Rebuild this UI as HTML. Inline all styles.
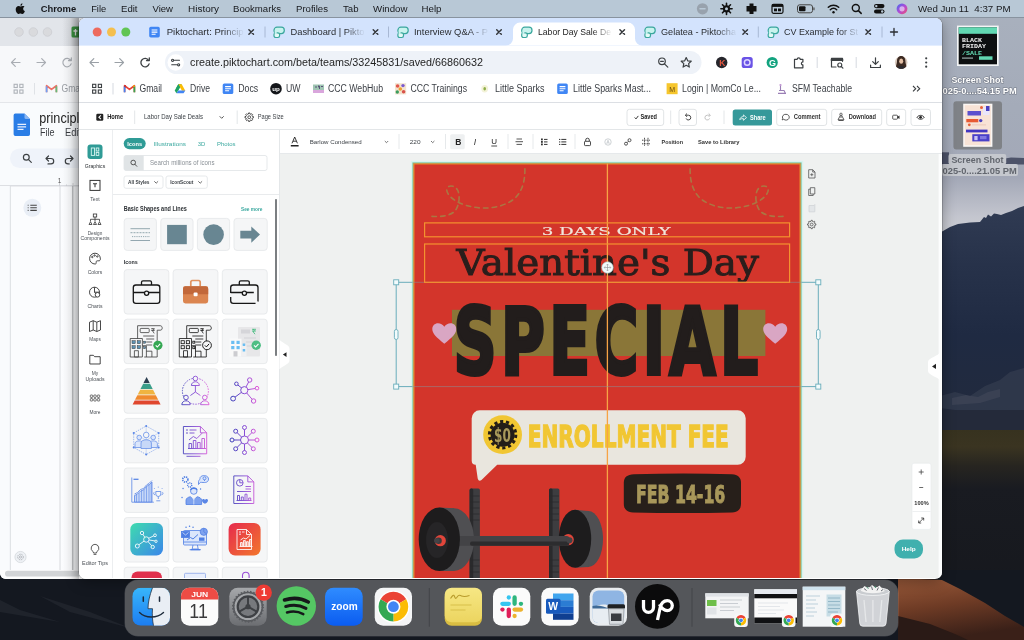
<!DOCTYPE html>
<html lang="en">
<head>
<meta charset="utf-8">
<title>Labor Day Sale Deals - Piktochart</title>
<style>
*{box-sizing:border-box;margin:0;padding:0}
html,body{width:1024px;height:640px;overflow:hidden;background:#1b1d24;font-family:"Liberation Sans",sans-serif;}
svg{position:absolute;left:0;top:0;overflow:hidden;display:block;will-change:transform}
svg text{font-family:"Liberation Sans",sans-serif;white-space:pre}
#desk{position:absolute;left:0;top:0;width:1024px;height:640px;overflow:hidden;background:#1d212b}
#menubar{position:absolute;left:0;top:0;width:1024px;height:17.600px;background:#b8c8d6}
#backwin{position:absolute;left:0;top:18px;width:90px;height:560.500px;background:#f9fbfd;overflow:hidden;border-radius:0 0 6px 6px}
#win{position:absolute;left:79px;top:18px;width:863px;height:560.5px;background:#fff;border-radius:6.500px 6.500px 7px 7px;overflow:hidden;}
#winshadow{position:absolute;left:79px;top:18px;width:863px;height:560.5px;border-radius:6.500px 6.500px 7px 7px;box-shadow:0 0 0 0.5px rgba(0,0,0,.32),0 3px 14px rgba(0,0,0,.34)}
#dock{position:absolute;left:125px;top:580px;width:773px;height:56px;background:#54565a;border-radius:13px;overflow:hidden;box-shadow:0 0 0 0.5px rgba(255,255,255,.18)}
.t{fill:#1f1f1f}
</style>
</head>
<body>
<div id="desk">
<svg id="wall" width="1024" height="640" viewBox="0 0 1024 640">
 <defs>
  <linearGradient id="sky" gradientUnits="userSpaceOnUse" x1="0" y1="0" x2="0" y2="240">
   <stop offset="0" stop-color="#a9b1be"/><stop offset="0.45" stop-color="#a4abb9"/><stop offset="0.74" stop-color="#a3a8b7"/><stop offset="0.9" stop-color="#c3c5ce"/><stop offset="1" stop-color="#d0d1d7"/>
  </linearGradient>
  <linearGradient id="mtn" x1="0" y1="0" x2="0" y2="1">
   <stop offset="0" stop-color="#303b53"/><stop offset="0.25" stop-color="#27324a"/><stop offset="0.55" stop-color="#1f2a42"/><stop offset="1" stop-color="#222a3c"/>
  </linearGradient>
  <linearGradient id="low" x1="0" y1="0" x2="0" y2="1">
   <stop offset="0" stop-color="#37321f"/><stop offset="0.08" stop-color="#3a3421"/><stop offset="0.17" stop-color="#272520"/><stop offset="0.28" stop-color="#191b21"/><stop offset="1" stop-color="#15171c"/>
  </linearGradient>
  <linearGradient id="rock" x1="0" y1="0" x2="0.3" y2="1">
   <stop offset="0" stop-color="#9a5a3a"/><stop offset="0.5" stop-color="#6e3b25"/><stop offset="1" stop-color="#3a2018"/>
  </linearGradient>
 </defs>
 <rect x="0" y="0" width="1024" height="240" fill="url(#sky)"/>
 <path d="M930 238 L943 231 L950 227 L958 224 L970 222.500 L980 222 L984 217 L986 218 L988 214.500 L991 216.500 L994 213.500 L997 214 L1001 215 L1006 213 L1012 211 L1018 208 L1024 206 V440 H930Z" fill="url(#mtn)"/>
 <path d="M940 396 L955 392 L970 396 L985 386 L1000 380 L1010 372 L1024 368 V412 L1000 410 L975 412 L955 410 L940 408Z" fill="#3b4154" opacity=".55"/>
 <path d="M952 398l14-3 12 2 10-5 12-3v8l-20 6-28 2z" fill="#565b6b" opacity=".3"/>
 <rect x="930" y="410" width="94" height="24" fill="#242a3a"/>
 <rect x="930" y="430" width="94" height="210" fill="url(#low)"/>
 <rect x="0" y="570" width="1024" height="70" fill="#141820"/>
 <path d="M0 600 L20 610 L60 622 L0 612Z M40 596 L90 612 L130 628 L70 612Z" fill="#232831" opacity=".7"/>
 <path d="M898 578 L942 580 L960 589 L985 603 L1005 616 L1024 627 V640 H898Z" fill="url(#rock)"/>
 <path d="M898 616 L930 624 L955 634 L968 640 H898Z" fill="#2a1a16"/>
</svg>
<div id="backwin">
<svg width="90" height="561" viewBox="0 18 90 561">
 <rect x="0" y="18" width="90" height="28" fill="#e2e5ea"/>
 <rect x="0" y="46" width="90" height="57" fill="#f7f8fa"/>
 <circle cx="19" cy="32" r="4.300" fill="#d9dadd" stroke="#c6c8cc" stroke-width=".6"/><circle cx="33.300" cy="32" r="4.300" fill="#d9dadd" stroke="#c6c8cc" stroke-width=".6"/><circle cx="47.500" cy="32" r="4.300" fill="#d9dadd" stroke="#c6c8cc" stroke-width=".6"/>
 <rect x="71.500" y="26.500" width="11" height="11" rx="1.500" fill="#3f9d46"/><path d="M75.500 29v6.500M73.500 31h4" stroke="#fff" stroke-width="1.300"/>
 <g fill="none" stroke="#a9adb3" stroke-width="1.200" stroke-linecap="round" stroke-linejoin="round">
  <path d="M20 62.500h-8.500M15.300 58.700l-3.800 3.800 3.800 3.800"/><path d="M37 62.500h8.500M41.700 58.700l3.800 3.800-3.800 3.800"/>
  <path d="M70.600 60.300a4.200 4.200 0 1 0 .5 3.600M71.300 57.800v2.800h-2.800"/>
 </g>
 <g fill="none" stroke="#aeb2b8" stroke-width="1.100"><rect x="14.100" y="84.300" width="3.200" height="3.200"/><rect x="19.800" y="84.300" width="3.200" height="3.200"/><rect x="14.100" y="90" width="3.200" height="3.200"/><rect x="19.800" y="90" width="3.200" height="3.200"/></g>
 <path d="M34.500 83v11.500" stroke="#dfe2e6" stroke-width="1"/>
 <g opacity=".75"><path d="M46.600 92.300v-6.600l4.900 3.700 4.900-3.700v6.600" fill="none" stroke="#ea4335" stroke-width="1.700" stroke-linejoin="round"/><path d="M46.600 92.300v-6" stroke="#4285f4" stroke-width="1.700"/><path d="M56.400 92.300v-6" stroke="#34a853" stroke-width="1.700"/></g>
 <text x="61.500" y="92.300" font-size="10" fill="#9a9ea4" textLength="22.500" lengthAdjust="spacingAndGlyphs">Gmail</text>
 <path d="M0 102.500h90" stroke="#e4e6ea" stroke-width="1"/>
 <rect x="0" y="103" width="90" height="476" fill="#f9fbfd"/>
 <!-- docs icon -->
 <path d="M15.300 113.500h9.200l5.500 5.500v15.300a1.700 1.700 0 0 1-1.700 1.700h-13a1.700 1.700 0 0 1-1.700-1.700v-19.100a1.700 1.700 0 0 1 1.700-1.700z" fill="#2a7de6"/><path d="M24.500 113.500l5.500 5.500h-4a1.500 1.500 0 0 1-1.500-1.500z" fill="#8ab6f2"/>
 <path d="M17.500 124.300h8.600M17.500 126.800h8.600M17.500 129.300h6" stroke="#e8f0fe" stroke-width="1.200"/>
 <text x="39.300" y="122.800" font-size="14.500" fill="#1f1f1f" textLength="53.500" lengthAdjust="spacingAndGlyphs">principles</text>
 <text x="40" y="135.800" font-size="10.500" fill="#3a3d42" textLength="14.500" lengthAdjust="spacingAndGlyphs">File</text>
 <text x="65" y="135.800" font-size="10.500" fill="#3a3d42" textLength="16" lengthAdjust="spacingAndGlyphs">Edit</text>
 <rect x="10" y="148.500" width="100" height="19.500" rx="9.700" fill="#eff3fa"/>
 <g fill="none" stroke="#3c4043" stroke-width="1.200" stroke-linecap="round" stroke-linejoin="round">
  <circle cx="26.300" cy="157.300" r="2.900"/><path d="M28.600 159.600l2.700 2.700"/>
  <path d="M46.300 158.500h4.700a2.700 2.700 0 0 1 0 5.400h-3M48.500 156l-2.500 2.500 2.500 2.500"/>
  <path d="M72.700 158.500h-4.700a2.700 2.700 0 0 0 0 5.400h1.200M70.500 156l2.500 2.500-2.500 2.500"/>
 </g>
 <text x="57.700" y="183.300" font-size="6.500" fill="#555">1</text>
 <path d="M0 185.500h90" stroke="#d5d8dc" stroke-width=".8"/>
 <path d="M59.500 183v3M66.500 184.500v1.500M73 183v3" stroke="#b8bbc0" stroke-width=".6"/>
 <rect x="10.300" y="186" width="100" height="390" fill="#fbfcfe" stroke="#d9dce0" stroke-width=".9"/>
 <path d="M60 186v384" stroke="#d4d7db" stroke-width=".9"/><path d="M72.800 186v384" stroke="#a9abae" stroke-width="1"/>
 <circle cx="32.300" cy="207.800" r="9" fill="#e9eef6"/>
 <path d="M30.300 205.200h6.500M30.300 207.800h6.500M30.300 210.400h6.500" stroke="#444" stroke-width="1.100"/><path d="M27.700 205.200h.9M27.700 207.800h.9M27.700 210.400h.9" stroke="#444" stroke-width="1.100"/>
 <circle cx="20.500" cy="557" r="5.600" fill="#eef1f5" stroke="#d0d4d9" stroke-width=".7"/><circle cx="20.500" cy="557" r="2.800" fill="none" stroke="#9a9ea4" stroke-width=".7" stroke-dasharray="1.500 .8"/><circle cx="20.500" cy="557" r="1.100" fill="none" stroke="#9a9ea4" stroke-width=".6"/>
 <rect x="0" y="570" width="90" height="9" fill="#fdfdfd"/><rect x="5" y="570.800" width="80" height="5.700" rx="2.800" fill="#d2d4d6"/>
 <defs><linearGradient id="shl" x1="0" x2="1" y1="0" y2="0"><stop offset="0" stop-color="#000" stop-opacity="0"/><stop offset=".5" stop-color="#000" stop-opacity=".04"/><stop offset="1" stop-color="#000" stop-opacity=".17"/></linearGradient></defs>
 <rect x="62" y="18" width="17" height="561" fill="url(#shl)"/><rect x="62" y="18" width="17" height="28" fill="url(#shl)"/>
</svg>
</div>
<svg id="deskicons" width="84" height="170" viewBox="940 18 84 170" style="left:940px;top:18px">
 <rect x="942" y="152.300" width="7" height="11.700" fill="#4d5369"/><path d="M1005 158.500l6-1 13 .5v6.500h-19z" fill="#4d5369"/>
 <!-- icon 1 -->
 <rect x="957" y="25.600" width="41.700" height="40.400" fill="#f4f5f6"/>
 <rect x="958.700" y="27.300" width="38.300" height="37" fill="#0d0f10"/>
 <rect x="958.700" y="27.300" width="38.300" height="6.500" fill="#62d8b2"/>
 <g font-size="6.200" font-weight="bold" style="font-family:'Liberation Mono',monospace" fill="#f2f2f2">
  <text x="962" y="42" textLength="20" lengthAdjust="spacingAndGlyphs" style="font-family:'Liberation Mono',monospace">BLACK</text>
  <text x="962" y="48.300" textLength="24" lengthAdjust="spacingAndGlyphs" style="font-family:'Liberation Mono',monospace">FRIDAY</text>
  <text x="962" y="54.600" fill="#62d8b2" textLength="20" lengthAdjust="spacingAndGlyphs" style="font-family:'Liberation Mono',monospace">/SALE</text>
 </g>
 <rect x="962" y="57.500" width="11" height="1.200" fill="#9aa"/><rect x="979" y="56.300" width="13.500" height="3.500" fill="#62d8b2"/>
 <g font-size="9.800" font-weight="bold" fill="#fff" style="paint-order:stroke" stroke="#3a3f4a" stroke-opacity=".45" stroke-width="1.200">
  <text x="951.400" y="83" textLength="52" lengthAdjust="spacingAndGlyphs">Screen Shot</text>
  <text x="942.500" y="94.200" textLength="74.200" lengthAdjust="spacingAndGlyphs">025-0....54.15 PM</text>
 </g>
 <!-- icon 2 (selected) -->
 <rect x="953.400" y="101.300" width="48.600" height="48.300" rx="3" fill="#7f8287"/>
 <rect x="963.200" y="103.700" width="29.200" height="43.100" fill="#fbf7f4"/>
 <rect x="964.700" y="105.200" width="26.200" height="40" fill="#f8e3d6"/>
 <rect x="967.500" y="111" width="13.500" height="4.500" fill="#5b50cf"/><rect x="983" y="107" width="6.500" height="8" fill="#ebe6fa"/><circle cx="981.500" cy="107.500" r="1.500" fill="#e6603a"/><rect x="986" y="106" width="3.500" height="5" fill="#4a40c0"/>
 <rect x="966.300" y="119" width="12" height="3.300" fill="#e85a33"/><circle cx="980.700" cy="120.600" r="1.700" fill="#4a40c0"/>
 <circle cx="969.300" cy="124.800" r="1.400" fill="#e6603a"/><rect x="972" y="124" width="14" height="1.600" fill="#f1d2c4"/>
 <rect x="966" y="129.600" width="21.500" height="2.800" fill="#4337c2"/>
 <rect x="972.300" y="134.200" width="17.200" height="7.200" fill="#4a40c8"/><rect x="974.300" y="136" width="3.300" height="4.200" fill="#c9c4f4"/><rect x="980" y="136" width="6.500" height="3.200" fill="#8078e0"/>
 <rect x="948.500" y="154" width="57.700" height="10.500" rx="2" fill="#c5c8ce"/>
 <rect x="942" y="164" width="76" height="12" rx="2" fill="#c5c8ce"/>
 <g font-size="9.800" font-weight="bold" fill="#62666e">
  <text x="951.400" y="162.600" textLength="52" lengthAdjust="spacingAndGlyphs">Screen Shot</text>
  <text x="942.500" y="173.900" textLength="74.200" lengthAdjust="spacingAndGlyphs">025-0....21.05 PM</text>
 </g>
</svg>
<div id="winshadow"></div>
<div id="win">
<svg width="863" height="560" viewBox="79 18 863 560">
 <defs>
  <g id="pk"><rect x="0.700" y="0.500" width="10.300" height="6.400" rx="3" fill="#c8f3ee" stroke="#3aa79d" stroke-width="1.200"/><rect x="0.700" y="6.200" width="5.600" height="4.600" rx="1.700" fill="#e4faf7" stroke="#3aa79d" stroke-width="1.200"/><rect x="1.400" y="4" width="2" height="3.400" fill="#c8f3ee"/></g>
  <g id="gdoc"><rect x="0" y="0" width="10.600" height="10.600" rx="1.600" fill="#4086f4"/><path d="M2.400 3.200h5.800M2.400 5.300h5.800M2.400 7.400h4" stroke="#fff" stroke-width="1.100"/></g>
  <g id="xx"><path d="M-2.300 -2.300l4.600 4.600M2.300 -2.300l-4.600 4.600" stroke="#33363a" stroke-width="1.450" stroke-linecap="round"/></g>
  <linearGradient id="fade" x1="0" x2="1" y1="0" y2="0"><stop offset="0" stop-color="#d3e3fd" stop-opacity="0"/><stop offset="1" stop-color="#d3e3fd"/></linearGradient>
  <linearGradient id="fadew" x1="0" x2="1" y1="0" y2="0"><stop offset="0" stop-color="#fff" stop-opacity="0"/><stop offset="1" stop-color="#fff"/></linearGradient>
 </defs>
 <!-- tab strip -->
 <rect x="79" y="18" width="863" height="27.600" fill="#d3e3fd"/>
 <circle cx="97.200" cy="32" r="4.500" fill="#ed6a5e"/><circle cx="111.500" cy="32" r="4.500" fill="#f4bf4f"/><circle cx="125.800" cy="32" r="4.500" fill="#61c554"/>
 <!-- active tab -->
 <path d="M506 45.600a7 7 0 0 0 7-7v-9a7 7 0 0 1 7-7h108a7 7 0 0 1 7 7v9a7 7 0 0 0 7 7z" fill="#fff"/>
 <g font-size="9.800" fill="#2a2d31">
  <use href="#gdoc" x="149.200" y="26.800"/>
  <text x="166.700" y="35.300" textLength="77" lengthAdjust="spacingAndGlyphs">Piktochart: Princip</text>
  <rect x="224" y="24" width="20" height="16" fill="url(#fade)"/>
  <use href="#xx" x="251.200" y="32"/>
  <path d="M265 26.500v11M388.500 26.500v11M758.300 26.500v11M882 26.500v11" stroke="#a8b8d4" stroke-width="1"/>
  <use href="#pk" x="273.300" y="26.700"/>
  <text x="290.500" y="35.300" textLength="74" lengthAdjust="spacingAndGlyphs">Dashboard | Pikto</text>
  <rect x="345" y="24" width="20" height="16" fill="url(#fade)"/>
  <use href="#xx" x="375.500" y="32"/>
  <use href="#pk" x="397.200" y="26.700"/>
  <text x="414" y="35.300" textLength="74" lengthAdjust="spacingAndGlyphs">Interview Q&amp;A - P</text>
  <rect x="469" y="24" width="20" height="16" fill="url(#fade)"/>
  <use href="#xx" x="499" y="32"/>
  <use href="#pk" x="521" y="26.700"/>
  <text x="538" y="35.300" fill="#1f1f1f" textLength="73" lengthAdjust="spacingAndGlyphs">Labor Day Sale De</text>
  <rect x="593" y="24" width="20" height="16" fill="url(#fadew)"/>
  <use href="#xx" x="622.200" y="32"/>
  <use href="#pk" x="644.200" y="26.700"/>
  <text x="661" y="35.300" textLength="75" lengthAdjust="spacingAndGlyphs">Gelatea - Piktocha</text>
  <rect x="717" y="24" width="20" height="16" fill="url(#fade)"/>
  <use href="#xx" x="745.200" y="32"/>
  <use href="#pk" x="767.500" y="26.700"/>
  <text x="784" y="35.300" textLength="74" lengthAdjust="spacingAndGlyphs">CV Example for St</text>
  <rect x="840" y="24" width="20" height="16" fill="url(#fade)"/>
  <use href="#xx" x="868.200" y="32"/>
  <path d="M890.500 32h7M894 28.500v7" stroke="#2a2d31" stroke-width="1.300" stroke-linecap="round"/>
 </g>
 <!-- toolbar -->
 <g fill="none" stroke="#9aa0a6" stroke-width="1.200" stroke-linecap="round" stroke-linejoin="round">
  <path d="M98.500 62.500h-8.500M93.800 58.700l-3.800 3.800 3.800 3.800"/>
  <path d="M115 62.500h8.500M119.700 58.700l3.800 3.800-3.800 3.800"/>
 </g>
 <g fill="none" stroke="#3c4043" stroke-width="1.300" stroke-linecap="round" stroke-linejoin="round">
  <path d="M148.600 60.300a4.200 4.200 0 1 0 .5 3.600"/><path d="M149.300 57.800v2.800h-2.800" />
 </g>
 <rect x="165" y="51" width="536.500" height="23" rx="11.500" fill="#eef2f8"/>
 <circle cx="175.700" cy="62.500" r="8.200" fill="#fff"/>
 <g stroke="#3c4043" stroke-width="1.100" fill="none" stroke-linecap="round"><path d="M174.500 60.300h5M171.700 64.800h5"/><circle cx="172.600" cy="60.300" r="1.100"/><circle cx="178.600" cy="64.800" r="1.100"/></g>
 <text x="190" y="66.200" font-size="11.500" fill="#1f1f1f" textLength="293" lengthAdjust="spacingAndGlyphs">create.piktochart.com/beta/teams/33245831/saved/66860632</text>
 <g fill="none" stroke="#3c4043" stroke-width="1.200" stroke-linecap="round" stroke-linejoin="round">
  <circle cx="662" cy="61.300" r="3.300"/><path d="M664.500 63.800l3.300 3.300M660.600 61.300h2.800"/>
  <path d="M686.200 57.600l1.500 3.200 3.500.4-2.600 2.400.7 3.500-3.100-1.800-3.100 1.800.7-3.500-2.600-2.400 3.500-.4z"/>
 </g>
 <circle cx="721.700" cy="62.500" r="5.700" fill="#26262c"/><text x="719.300" y="65.600" font-size="8.500" font-weight="bold" fill="#e0553f">K</text>
 <rect x="741.700" y="57" width="11" height="11" rx="2.600" fill="#6a53e6"/><circle cx="747.200" cy="62.500" r="2.800" fill="none" stroke="#ddd6ff" stroke-width="1.500"/>
 <circle cx="772.200" cy="62.500" r="5.600" fill="#12a37f"/><text x="769" y="65.800" font-size="9" font-weight="bold" fill="#fff">G</text>
 <path d="M794.500 59.300h2.700a1.500 1.500 0 1 1 3 0h2.700v2.600a1.500 1.500 0 1 0 0 3v2.900h-8.400z" fill="none" stroke="#3c4043" stroke-width="1.200" stroke-linejoin="round"/>
 <path d="M817.200 57v11M856.200 57v11" stroke="#d5d9e0" stroke-width="1"/>
 <g fill="none" stroke="#3c4043" stroke-width="1.200" stroke-linecap="round" stroke-linejoin="round">
  <path d="M836 67h-4.500v-8.700h11v3"/><path d="M831.500 60h11" stroke-width="1.800"/><circle cx="839.800" cy="65" r="2"/><path d="M841.300 66.500l1.600 1.600"/>
  <path d="M875.500 57.800v6.400M872.700 61.600l2.800 2.800 2.800-2.800M870.600 65.200v2.300h9.800v-2.300"/>
 </g>
 <circle cx="901.200" cy="62.500" r="6.300" fill="#d9c9bd"/><path d="M897 61c0-3.500 2-5 4.200-5s4.200 1.500 4.200 5c0 2 .8 4 1 5.500-1.300 1.600-3 2.300-5.200 2.300s-3.900-.7-5.200-2.300c.2-1.500 1-3.500 1-5.500z" fill="#3c2a22"/><ellipse cx="901.200" cy="61.200" rx="2" ry="2.600" fill="#e6c1a6"/><path d="M897.600 67.300c1-1.800 6.200-1.800 7.200 0-1 1-2.200 1.500-3.600 1.500s-2.600-.5-3.600-1.500z" fill="#2a2a30"/>
 <circle cx="926.200" cy="58.300" r="1.100" fill="#3c4043"/><circle cx="926.200" cy="62.500" r="1.100" fill="#3c4043"/><circle cx="926.200" cy="66.700" r="1.100" fill="#3c4043"/>
 <!-- bookmarks bar -->
 <g fill="none" stroke="#3c4043" stroke-width="1.100"><rect x="92.600" y="84.300" width="3.200" height="3.200"/><rect x="98.300" y="84.300" width="3.200" height="3.200"/><rect x="92.600" y="90" width="3.200" height="3.200"/><rect x="98.300" y="90" width="3.200" height="3.200"/></g>
 <path d="M113 83v11.500" stroke="#d5d9e0" stroke-width="1"/>
 <g font-size="10" fill="#3a3e44">
  <path d="M124.600 92.300v-6.600l4.900 3.700 4.900-3.700v6.600" fill="none" stroke="#ea4335" stroke-width="1.700" stroke-linejoin="round"/><path d="M124.600 92.300v-6" stroke="#4285f4" stroke-width="1.700"/><path d="M134.400 92.300v-6" stroke="#34a853" stroke-width="1.700"/><path d="M124.600 85.700l1 .8" stroke="#c5221f" stroke-width="1.700"/><path d="M134.400 85.700l-1 .8" stroke="#fbbc04" stroke-width="1.700"/>
  <text x="139.500" y="92.300" textLength="22.500" lengthAdjust="spacingAndGlyphs">Gmail</text>
  <path d="M178.300 84.300h3.400l-3.600 6.400-1.700-3z" fill="#1fa463"/><path d="M181.700 84.300l3.600 6.400h-3.400l-3.600-6.400z" fill="#fbbc04"/><path d="M176.400 93.300l1.700-2.900h7.200l-1.700 2.900z" fill="#4285f4"/><path d="M178.300 84.300l-3.600 6.300 1.700 2.700 3.600-6z" fill="#1fa463"/>
  <text x="190" y="92.300" textLength="20" lengthAdjust="spacingAndGlyphs">Drive</text>
  <use href="#gdoc" x="222.700" y="83.400"/>
  <text x="238.200" y="92.300" textLength="20" lengthAdjust="spacingAndGlyphs">Docs</text>
  <circle cx="276" cy="88.700" r="5.800" fill="#14161a"/><text x="272.200" y="90.600" font-size="6" font-weight="bold" fill="#fff" textLength="7.600" lengthAdjust="spacingAndGlyphs">up</text>
  <text x="286" y="92.300" textLength="14.500" lengthAdjust="spacingAndGlyphs">UW</text>
  <rect x="313" y="84.500" width="11" height="8" fill="#9fc5b2"/><rect x="313" y="90" width="11" height="3" fill="#d9a6dc"/><path d="M315 87h2M318 86h1.500v3M321 86.500h2" stroke="#59507a" stroke-width="1"/>
  <text x="328" y="92.300" textLength="55" lengthAdjust="spacingAndGlyphs">CCC WebHub</text>
  <rect x="395" y="83.200" width="11.200" height="11.200" fill="#f3e3cf"/><circle cx="397.600" cy="86" r="1.800" fill="#e2574c"/><circle cx="403" cy="85.600" r="1.700" fill="#7a5ad0"/><circle cx="400.300" cy="89" r="1.800" fill="#f0a030"/><circle cx="397.300" cy="92" r="1.700" fill="#3b9d5f"/><circle cx="403.600" cy="91.700" r="1.800" fill="#d8524a"/>
  <text x="410.500" y="92.300" textLength="56.500" lengthAdjust="spacingAndGlyphs">CCC Trainings</text>
  <ellipse cx="484.700" cy="88.700" rx="3.400" ry="3.700" fill="#f3f2d8"/><ellipse cx="484.700" cy="88.700" rx="1.300" ry="1.800" fill="#8fae4a"/>
  <text x="495" y="92.300" textLength="49.500" lengthAdjust="spacingAndGlyphs">Little Sparks</text>
  <use href="#gdoc" x="557.200" y="83.400"/>
  <text x="573" y="92.300" textLength="78" lengthAdjust="spacingAndGlyphs">Little Sparks Mast...</text>
  <rect x="666.600" y="83.200" width="11" height="11" fill="#f6c62d"/><text x="669.300" y="91.600" font-size="7" font-family="'Liberation Serif',serif" fill="#6a4a10">M</text>
  <text x="682" y="92.300" textLength="79" lengthAdjust="spacingAndGlyphs">Login | MomCo Le...</text>
  <path d="M780.500 84v6M778 93.400h8M779 90.500h5l1.500 2.900" fill="none" stroke="#9a7fb5" stroke-width="1.100"/><circle cx="780.500" cy="85" r="1.100" fill="#c49ad6"/>
  <text x="792" y="92.300" textLength="60" lengthAdjust="spacingAndGlyphs">SFM Teachable</text>
  <path d="M913 86l2.700 2.700-2.700 2.700M917 86l2.700 2.700-2.700 2.700" fill="none" stroke="#3c4043" stroke-width="1.100"/>
 </g>
 <path d="M79 102.500h863" stroke="#dcdfe4" stroke-width="1"/>
 <!-- ===== Piktochart app ===== -->
 <rect x="79" y="103" width="863" height="476" fill="#eff1f0"/>
 <rect x="79" y="103" width="863" height="26.500" fill="#fff"/>
 <path d="M79 129.500h863" stroke="#e3e6e8" stroke-width="1"/>
 <!-- top bar left -->
 <rect x="96.300" y="113.700" width="7" height="7" rx="1.300" fill="#222"/><path d="M100.900 115.300l-2 1.900 2 1.900" fill="none" stroke="#fff" stroke-width="1.100"/>
 <g font-size="6.300" fill="#3a3f44">
  <text x="107.200" y="119.300" font-weight="bold" fill="#222" textLength="16" lengthAdjust="spacingAndGlyphs">Home</text>
  <path d="M134.700 110.500v13.500M237.200 110.500v13.500M670.700 110.500v13.500M724 110.500v13.500" stroke="#e3e6e8" stroke-width="1"/>
  <text x="144" y="119.300" textLength="59" lengthAdjust="spacingAndGlyphs">Labor Day Sale Deals</text>
  <path d="M219.700 116.300l2 2 2-2" fill="none" stroke="#444" stroke-width=".9"/>
  <path d="M248.43 113.99L248.59 112.94L249.81 112.94L249.97 113.99L250.92 114.39L251.78 113.76L252.64 114.62L252.01 115.48L252.41 116.43L253.46 116.59L253.46 117.81L252.41 117.97L252.01 118.92L252.64 119.78L251.78 120.64L250.92 120.01L249.97 120.41L249.81 121.46L248.59 121.46L248.43 120.41L247.48 120.01L246.62 120.64L245.76 119.78L246.39 118.92L245.99 117.97L244.94 117.81L244.94 116.59L245.99 116.43L246.39 115.48L245.76 114.62L246.62 113.76L247.48 114.39z" fill="none" stroke="#333" stroke-width=".85" stroke-linejoin="round"/><circle cx="249.200" cy="117.200" r="1.400" fill="none" stroke="#333" stroke-width=".8"/>
  <text x="257.700" y="119.300" textLength="26" lengthAdjust="spacingAndGlyphs">Page Size</text>
  <!-- right buttons -->
  <rect x="627" y="109.300" width="36.700" height="16.200" rx="2.500" fill="#fff" stroke="#e1e4e6" stroke-width="1"/>
  <path d="M634.700 117.500l1.300 1.400 2.300-3" fill="none" stroke="#222" stroke-width=".9"/>
  <text x="640.500" y="119.400" font-weight="bold" fill="#222" textLength="16.500" lengthAdjust="spacingAndGlyphs">Saved</text>
  <rect x="679" y="109.300" width="17.500" height="16.200" rx="2.500" fill="#fff" stroke="#e1e4e6" stroke-width="1"/>
  <path d="M685.700 115.200h2.700a2.400 2.400 0 1 1-2.300 3.200M687 113.500l-1.700 1.700 1.700 1.700" fill="none" stroke="#333" stroke-width=".9"/>
  <path d="M710 115.200h-2.700a2.400 2.400 0 1 0 2.300 3.200M708.700 113.500l1.700 1.700-1.700 1.700" fill="none" stroke="#bbb" stroke-width=".9"/>
  <rect x="732.700" y="109.600" width="39.300" height="16" rx="2.500" fill="#36999a"/>
  <path d="M739.700 119.500c.6-2 1.900-2.900 3.700-2.900v-1.700l3.100 2.700-3.100 2.700v-1.700c-1.500 0-2.700.2-3.700.9z" fill="none" stroke="#fff" stroke-width=".8" stroke-linejoin="round"/>
  <text x="750" y="119.500" font-weight="bold" fill="#fff" textLength="15.700" lengthAdjust="spacingAndGlyphs">Share</text>
  <rect x="776.700" y="109.300" width="50" height="16.200" rx="2.500" fill="#fff" stroke="#e1e4e6" stroke-width="1"/>
  <path d="M786 114.300a3.300 2.900 0 1 1-2.300 5l-1.500.6.500-1.500a3.300 2.900 0 0 1 3.300-4.100z" fill="none" stroke="#333" stroke-width=".8"/>
  <text x="793.700" y="119.400" font-weight="bold" fill="#333" textLength="26.800" lengthAdjust="spacingAndGlyphs">Comment</text>
  <rect x="831.700" y="109.300" width="50" height="16.200" rx="2.500" fill="#fff" stroke="#e1e4e6" stroke-width="1"/>
  <path d="M841 114.200l-3 5.600h6zM841 116v2M838.500 120.500h5" fill="none" stroke="#333" stroke-width=".8"/><circle cx="841" cy="114.300" r="1.200" fill="#fff" stroke="#333" stroke-width=".7"/>
  <text x="848.700" y="119.400" font-weight="bold" fill="#333" textLength="27.300" lengthAdjust="spacingAndGlyphs">Download</text>
  <rect x="886.700" y="109.300" width="19" height="16.200" rx="2.500" fill="#fff" stroke="#e1e4e6" stroke-width="1"/>
  <rect x="892.700" y="115.200" width="4.800" height="4" rx=".8" fill="none" stroke="#333" stroke-width=".8"/><path d="M897.500 116.700l2-1.100v3.300l-2-1.100z" fill="#333"/>
  <rect x="911" y="109.300" width="19.500" height="16.200" rx="2.500" fill="#fff" stroke="#e1e4e6" stroke-width="1"/>
  <path d="M917 117.300c1.800-2.600 5.400-2.600 7.200 0-1.800 2.600-5.400 2.600-7.200 0z" fill="none" stroke="#222" stroke-width=".9"/><circle cx="920.600" cy="117.300" r="1.400" fill="#222"/>
 </g>
 <!-- left sidebar -->
 <rect x="79" y="130" width="33.500" height="448" fill="#fff"/>
 <path d="M112.500 130v448" stroke="#eceef0" stroke-width="1"/>
 <g font-size="5.500" fill="#4a4f55" text-anchor="middle">
  <rect x="87.500" y="144.400" width="15" height="14.600" rx="3" fill="#2f9b96"/>
  <rect x="91.300" y="148" width="3.200" height="7.400" fill="none" stroke="#d9f5f1" stroke-width=".9"/><rect x="96.200" y="148" width="2.600" height="3" fill="none" stroke="#d9f5f1" stroke-width=".9"/><rect x="96.200" y="152.400" width="2.600" height="3" fill="none" stroke="#d9f5f1" stroke-width=".9"/>
  <text x="95" y="168" fill="#2b2f33" textLength="20.500" lengthAdjust="spacingAndGlyphs">Graphics</text>
  <rect x="90" y="180.400" width="10" height="10" fill="none" stroke="#333" stroke-width="1"/><path d="M93 183.700h4M95 183.700v3.600" stroke="#333" stroke-width="1.100"/>
  <text x="95" y="200.800" textLength="9.500" lengthAdjust="spacingAndGlyphs">Text</text>
  <g fill="none" stroke="#333" stroke-width=".8"><rect x="93.300" y="214" width="3.400" height="3"/><path d="M95 217v2.300M90.500 221.500v-2.200h9v2.200M95 219.300v2.200"/><path d="M89 224.500l1.500-2.700 1.500 2.700zM93.500 224.500l1.500-2.700 1.500 2.700zM98 224.500l1.500-2.700 1.500 2.700z"/></g>
  <text x="95" y="234.500" textLength="14.500" lengthAdjust="spacingAndGlyphs">Design</text>
  <text x="95" y="240.200" textLength="29" lengthAdjust="spacingAndGlyphs">Components</text>
  <g fill="none" stroke="#333" stroke-width=".9"><path d="M95 253.200a5.400 5.400 0 1 0 0 10.800c1 0 1.400-.6 1.200-1.400-.3-1 .2-1.800 1.300-1.800h1.400c1 0 1.500-.8 1.500-1.900 0-3.200-2.400-5.700-5.400-5.700z"/><circle cx="92.300" cy="257" r=".7"/><circle cx="94.600" cy="255.500" r=".7"/><circle cx="97.300" cy="256.500" r=".7"/></g>
  <text x="95" y="273.500" textLength="14.500" lengthAdjust="spacingAndGlyphs">Colors</text>
  <g fill="none" stroke="#333" stroke-width=".9"><circle cx="94.500" cy="292.200" r="5"/><path d="M94.500 287.200v5h5M94.500 292.200l3.300 3.600"/><circle cx="97.500" cy="294.800" r="2.300" fill="#fff"/></g>
  <text x="95" y="307.700" textLength="15" lengthAdjust="spacingAndGlyphs">Charts</text>
  <path d="M89.500 322.200l3.700-1.500 3.600 1.500 3.700-1.500v9.300l-3.700 1.500-3.600-1.500-3.700 1.500zM93.200 320.700v9.300M96.800 322.200v9.300" fill="none" stroke="#333" stroke-width=".9" stroke-linejoin="round"/>
  <text x="95" y="341.300" textLength="11.500" lengthAdjust="spacingAndGlyphs">Maps</text>
  <path d="M89.800 355.300h3.600l1.200 1.400h5.600v7.300h-10.400z" fill="none" stroke="#333" stroke-width=".9" stroke-linejoin="round"/>
  <text x="95" y="375.300" textLength="6.500" lengthAdjust="spacingAndGlyphs">My</text>
  <text x="95" y="381" textLength="19" lengthAdjust="spacingAndGlyphs">Uploads</text>
  <g fill="none" stroke="#333" stroke-width=".7"><rect x="90.300" y="395" width="2.400" height="2.400" rx=".6"/><rect x="93.800" y="395" width="2.400" height="2.400" rx=".6"/><rect x="97.300" y="395" width="2.400" height="2.400" rx=".6"/><rect x="90.300" y="398.600" width="2.400" height="2.400" rx=".6"/><rect x="93.800" y="398.600" width="2.400" height="2.400" rx=".6"/><rect x="97.300" y="398.600" width="2.400" height="2.400" rx=".6"/></g>
  <text x="95" y="414" textLength="11" lengthAdjust="spacingAndGlyphs">More</text>
  <path d="M95 544.300a3.900 3.900 0 0 0-2.300 7c.5.400.8 1 .8 1.700h3c0-.7.300-1.300.8-1.700a3.900 3.900 0 0 0-2.300-7zM93.600 554.400h2.800" fill="none" stroke="#333" stroke-width=".8"/>
  <text x="95" y="564.500" textLength="26" lengthAdjust="spacingAndGlyphs">Editor Tips</text>
 </g>
 <!-- ===== left panel ===== -->
 <rect x="113" y="130" width="166.500" height="448" fill="#fff"/>
 <path d="M279.500 130v448" stroke="#e4e7e9" stroke-width="1"/>
 <path d="M113 194.500h166" stroke="#e9ebed" stroke-width="1"/>
 <g font-size="6.200" fill="#3a3f44">
  <rect x="123.700" y="138" width="22" height="11.200" rx="5.600" fill="#2f9b96"/>
  <text x="127.300" y="145.800" font-weight="bold" fill="#fff" textLength="14.800" lengthAdjust="spacingAndGlyphs">Icons</text>
  <g fill="#3aa89f"><text x="153.500" y="145.800" textLength="32.500" lengthAdjust="spacingAndGlyphs">Illustrations</text>
  <text x="197.700" y="145.800" textLength="7.500" lengthAdjust="spacingAndGlyphs">3D</text>
  <text x="217" y="145.800" textLength="18.500" lengthAdjust="spacingAndGlyphs">Photos</text></g>
  <rect x="124" y="155.500" width="143" height="15" rx="2" fill="#fff" stroke="#e6e9eb" stroke-width="1"/>
  <path d="M126 155.500h17.700v15h-17.700a2 2 0 0 1-2-2v-11a2 2 0 0 1 2-2z" fill="#e0e4e6"/>
  <circle cx="133.200" cy="162.500" r="2.300" fill="none" stroke="#444" stroke-width=".9"/><path d="M134.900 164.300l1.900 2" stroke="#444" stroke-width=".9" stroke-linecap="round"/>
  <text x="150" y="165" fill="#8a9096" font-size="6.500" textLength="64.500" lengthAdjust="spacingAndGlyphs">Search millions of icons</text>
  <rect x="124" y="176" width="39" height="12.300" rx="2" fill="#fff" stroke="#e6e9eb" stroke-width="1"/>
  <text x="128" y="184.200" font-weight="bold" font-size="5.600" textLength="21.500" lengthAdjust="spacingAndGlyphs">All Styles</text>
  <path d="M154.300 181.300l1.900 1.900 1.900-1.900" fill="none" stroke="#444" stroke-width=".8"/>
  <rect x="166" y="176" width="41.300" height="12.300" rx="2" fill="#fff" stroke="#e6e9eb" stroke-width="1"/>
  <text x="170.300" y="184.200" font-weight="bold" font-size="5.600" textLength="23" lengthAdjust="spacingAndGlyphs">IconScout</text>
  <path d="M198.300 181.300l1.900 1.900 1.900-1.900" fill="none" stroke="#444" stroke-width=".8"/>
  <text x="123.800" y="211.200" font-weight="bold" fill="#2b2f33" font-size="6.300" textLength="63" lengthAdjust="spacingAndGlyphs">Basic Shapes and Lines</text>
  <text x="241" y="211.200" font-weight="bold" fill="#3aa89f" font-size="5.800" textLength="21.500" lengthAdjust="spacingAndGlyphs">See more</text>
  <text x="123.800" y="263.700" font-weight="bold" fill="#2b2f33" font-size="6" textLength="14" lengthAdjust="spacingAndGlyphs">Icons</text>
 </g>
 <rect x="275.200" y="199" width="1.600" height="157" rx=".8" fill="#5b5f63"/>
 <!-- shape cards -->
 <g fill="#f5f6f7" stroke="#e8eaec" stroke-width="1">
  <rect x="124.200" y="218.400" width="32.200" height="32" rx="3"/><rect x="160.800" y="218.400" width="32.200" height="32" rx="3"/><rect x="197.400" y="218.400" width="32.200" height="32" rx="3"/><rect x="234" y="218.400" width="33.200" height="32" rx="3"/>
 </g>
 <g stroke="#7a939d" stroke-width=".8"><path d="M130.500 228.700h19.500M130.500 240.500h19.500"/><path d="M130.500 232.700h19.500" stroke-dasharray="2 1"/><path d="M132 236.600h18" stroke-dasharray="1.200 1"/></g>
 <rect x="167.100" y="224.900" width="19.700" height="19.300" fill="#688692"/>
 <circle cx="213.600" cy="234.600" r="10.300" fill="#688692"/>
 <path d="M240.300 230.800h11v-4.300l8.700 8.100-8.700 8.100v-4.300h-11z" fill="#688692"/>
 <!-- icon cards -->
 <g fill="#f5f6f7" stroke="#e8eaec" stroke-width="1">
  <rect x="124.200" y="269.600" width="44.600" height="44.400" rx="3"/><rect x="173.100" y="269.600" width="44.800" height="44.400" rx="3"/><rect x="222.300" y="269.600" width="44.900" height="44.400" rx="3"/>
  <rect x="124.200" y="319.200" width="44.600" height="44.400" rx="3"/><rect x="173.100" y="319.200" width="44.800" height="44.400" rx="3"/><rect x="222.300" y="319.200" width="44.900" height="44.400" rx="3"/>
  <rect x="124.200" y="368.800" width="44.600" height="44.400" rx="3"/><rect x="173.100" y="368.800" width="44.800" height="44.400" rx="3"/><rect x="222.300" y="368.800" width="44.900" height="44.400" rx="3"/>
  <rect x="124.200" y="418.400" width="44.600" height="44.400" rx="3"/><rect x="173.100" y="418.400" width="44.800" height="44.400" rx="3"/><rect x="222.300" y="418.400" width="44.900" height="44.400" rx="3"/>
  <rect x="124.200" y="468" width="44.600" height="44.400" rx="3"/><rect x="173.100" y="468" width="44.800" height="44.400" rx="3"/><rect x="222.300" y="468" width="44.900" height="44.400" rx="3"/>
  <rect x="124.200" y="517.600" width="44.600" height="44.400" rx="3"/><rect x="173.100" y="517.600" width="44.800" height="44.400" rx="3"/><rect x="222.300" y="517.600" width="44.900" height="44.400" rx="3"/>
  <rect x="124.200" y="567.200" width="44.600" height="44.400" rx="3"/><rect x="173.100" y="567.200" width="44.800" height="44.400" rx="3"/><rect x="222.300" y="567.200" width="44.900" height="44.400" rx="3"/>
 </g>
 <!-- row1: briefcases -->
 <g fill="none" stroke="#161616" stroke-width="1.300" stroke-linejoin="round">
  <rect x="133.300" y="285" width="26.500" height="18.300" rx="2.600"/><path d="M141.500 285v-2.700a1.500 1.500 0 0 1 1.500-1.500h7a1.500 1.500 0 0 1 1.500 1.500v2.700M133.300 292.500h11M149 292.500h10.800"/><circle cx="146.600" cy="293.300" r="2.100"/>
  <rect x="230.700" y="285" width="27.300" height="18.300" rx="2.600" stroke-dasharray="40 3 30 4"/><path d="M239.300 285v-2.700a1.500 1.500 0 0 1 1.500-1.500h7a1.500 1.500 0 0 1 1.500 1.500v2.700M230.700 292.500h11.300M246.800 292.500h7"/><circle cx="244.400" cy="293.300" r="2.100"/>
 </g>
 <path d="M190.800 286.500v-4.300a1.700 1.700 0 0 1 1.700-1.700h6a1.700 1.700 0 0 1 1.700 1.700v4.300" fill="none" stroke="#e0925f" stroke-width="1.700"/>
 <rect x="183" y="286.300" width="25.200" height="17.200" rx="2.400" fill="#db8550"/><path d="M183 288.700a2.400 2.400 0 0 1 2.400-2.400h20.400a2.400 2.400 0 0 1 2.400 2.400v5.600h-25.200z" fill="#c2683a"/>
 <rect x="193.600" y="292.500" width="4" height="3.800" rx="1" fill="#fff"/>
 <!-- row2: building + document -->
 <defs>
  <linearGradient id="pm2" gradientUnits="userSpaceOnUse" x1="181" y1="0" x2="210" y2="0"><stop offset="0" stop-color="#3b3fb8"/><stop offset=".5" stop-color="#8a4fd6"/><stop offset="1" stop-color="#e85ad8"/></linearGradient>
  <linearGradient id="pm3" gradientUnits="userSpaceOnUse" x1="231" y1="0" x2="259" y2="0"><stop offset="0" stop-color="#3b3fb8"/><stop offset=".5" stop-color="#8a4fd6"/><stop offset="1" stop-color="#e85ad8"/></linearGradient>
  <linearGradient id="tb" x1="0" y1="0" x2="1" y2="1"><stop offset="0" stop-color="#3fdcae"/><stop offset="1" stop-color="#3a86ea"/></linearGradient>
  <linearGradient id="ro" x1="0" y1="0" x2="1" y2="1"><stop offset="0" stop-color="#e62a4e"/><stop offset="1" stop-color="#f2772c"/></linearGradient>
  <g id="bdoc" fill="none" stroke-width=".8" stroke-linejoin="round">
   <path d="M7.400 0h22.600c1.500 0 2 1.300 2 2.500s-.8 2-2 2h-3v26.800h-13"/><path d="M7.400 0v13"/>
   <rect x="10" y="2.700" width="9" height="4.200" rx=".8"/><path d="M21 3h3.500M21 4.700h3.500M22.300 3c1.600 0 1.600 2 0 2l1.700 2.700"/>
   <path d="M13 10.300h11M16 13.300h8M16 16.300h6M16 19.300h6"/>
   <rect x="0" y="12.800" width="12.200" height="18.500"/><path d="M12.200 20h4v11.300M16.200 25.500h5.500v5.800"/>
   <rect x="4.200" y="25" width="4" height="6.300"/>
  </g>
  <g id="bwin"><rect x="1.800" y="15" width="3.200" height="3" /><rect x="7" y="15" width="3.200" height="3"/><rect x="1.800" y="20" width="3.200" height="3"/><rect x="7" y="20" width="3.200" height="3"/><rect x="13.500" y="15.500" width="2" height="2"/><rect x="13.500" y="21" width="2" height="2"/></g>
 </defs>
 <use href="#bdoc" x="130.200" y="325.700" stroke="#3d3d3d"/><use href="#bwin" x="130.200" y="325.700" fill="#5c93b5" stroke="#3d3d3d" stroke-width=".5"/>
 <circle cx="157.900" cy="345.300" r="4.600" fill="#35a853"/><path d="M155.700 345.400l1.600 1.600 2.900-3.200" fill="none" stroke="#fff" stroke-width="1.100"/>
 <use href="#bdoc" x="179.300" y="325.700" stroke="#111" stroke-width="1"/><use href="#bwin" x="179.300" y="325.700" fill="none" stroke="#111" stroke-width=".8"/>
 <circle cx="207" cy="345.300" r="4.400" fill="#f5f6f7" stroke="#111" stroke-width=".9"/><path d="M204.900 345.400l1.500 1.500 2.700-3" fill="none" stroke="#111" stroke-width="1"/>
 <g opacity=".9"><rect x="238" y="327" width="22" height="29.500" rx="1" fill="#e6e6e8"/><rect x="241" y="329.500" width="9" height="4" fill="#d2d2d6"/><path d="M252 329.300h4M252 331h4M253 329.300c1.800 0 1.800 2.300 0 2.300l2 2.600" fill="none" stroke="#3cb878" stroke-width=".9"/>
 <path d="M244 338h12M246 342h9M246 346h7" stroke="#d0d0d4" stroke-width="1.200"/>
 <rect x="229.500" y="338.700" width="12" height="17.800" fill="#fafafa"/><rect x="241.500" y="345" width="5" height="11.500" fill="#f0f0f2"/>
 <g fill="#5bb8f2"><rect x="231.200" y="340.800" width="3.200" height="3.200"/><rect x="236.500" y="340.800" width="3.200" height="3.200"/><rect x="231.200" y="346" width="3.200" height="3.200"/><rect x="236.500" y="346" width="3.200" height="3.200"/><rect x="242.700" y="343.500" width="2.500" height="2.500"/><rect x="242.700" y="349" width="2.500" height="2.500"/></g>
 <rect x="233.500" y="351.200" width="4" height="5.300" fill="#c8c8cc"/>
 <circle cx="256.200" cy="345.300" r="4.700" fill="#3cb878"/><path d="M254 345.400l1.600 1.600 2.900-3.200" fill="none" stroke="#fff" stroke-width="1.100"/></g>
 <!-- row3 -->
 <path d="M146.600 377.100l3.100 6h-6.200z" fill="#2c3e50"/><path d="M143.200 383.800h6.800l2.700 5.200h-12.200z" fill="#3a9e8a"/><path d="M140.200 389.700h12.800l2.500 4.800h-17.800z" fill="#f0b440"/><path d="M137.400 395.200h18.400l2.400 4.500h-23.200z" fill="#f08a2e"/><path d="M134.700 400.400h23.800l2.100 4.100h-28z" fill="#e0472e"/>
 <g fill="none" stroke="url(#pm2)" stroke-width=".9">
  <circle cx="195.400" cy="391.200" r="13" stroke-dasharray="1.500 1.200"/>
  <path d="M195.400 385.500v6.500l-5 3.500M195.400 392l5 3.500"/>
  <g fill="#f5f6f7"><circle cx="195.400" cy="378.500" r="2.300"/><path d="M191.400 385.500c0-5 8-5 8 0z"/>
  <circle cx="186" cy="397.500" r="2.300"/><path d="M181.800 404.700c0-5.200 8.400-5.200 8.400 0z"/>
  <circle cx="204.800" cy="397.500" r="2.300"/><path d="M200.600 404.700c0-5.200 8.400-5.200 8.400 0z"/></g>
 </g>
 <g fill="none" stroke="url(#pm3)" stroke-width="1">
  <path d="M244.300 390.200l5.400-10.200M244.300 390.200l-7.900-6.400M244.300 390.200l12.700-2M244.300 390.200l-11.200 8.400M244.300 390.200l9.300 10.800"/>
  <g fill="#f5f6f7"><circle cx="244.300" cy="390.200" r="3.600"/><circle cx="249.700" cy="380" r="2.200"/><circle cx="236.400" cy="383.800" r="1.800"/><circle cx="257" cy="388.200" r="1.800"/><circle cx="233.100" cy="398.600" r="2.400"/><circle cx="253.600" cy="401" r="2.200"/></g>
 </g>
 <!-- row4 -->
 <g fill="none" stroke="#5a86e6" stroke-width=".7">
  <path d="M146.200 426l12.500 7v14.500l-12.500 7-12.500-7v-14.500z" stroke-dasharray="1.400 1" opacity=".8"/>
  <path d="M133.700 433l25 14.500M158.700 433l-25 14.500M146.200 426v28.500" opacity=".35"/>
  <g fill="#dbe6fb"><circle cx="139.200" cy="437.500" r="2.300"/><path d="M135 447.500v-4c0-3.500 8.400-3.500 8.400 0v4z"/><circle cx="153.200" cy="437.500" r="2.300"/><path d="M149 447.500v-4c0-3.500 8.400-3.500 8.400 0v4z"/>
  <circle cx="146.200" cy="435" r="2.800" fill="#f5f6f7"/><path d="M141 448.500v-5.500c0-4.300 10.400-4.300 10.400 0v5.500z" fill="#c7d8f8"/></g>
  <g fill="#5a86e6" stroke="none"><circle cx="146.200" cy="426" r="1"/><circle cx="158.700" cy="433" r="1"/><circle cx="158.700" cy="447.500" r="1"/><circle cx="146.200" cy="454.500" r="1"/><circle cx="133.700" cy="447.500" r="1"/><circle cx="133.700" cy="433" r="1"/></g>
 </g>
 <g fill="none" stroke="url(#pm2)" stroke-width=".9">
  <path d="M183.400 426.500h17l6.300 6.300v21h-23.300zM200.400 426.500v6.300h6.300"/>
  <path d="M186 430h2M189.500 430h7M186 433h2M189.500 433h5"/>
  <path d="M189 448.500v-5h2.600v5M193.300 448.500v-8h2.600v8M197.600 448.500v-6h2.600v6M201.900 448.500v-10h2.600v10M188 448.500h18" />
  <path d="M189 440l4.300-3.500 3.500 2 5.500-5.500"/><path d="M186.500 456.300h14"/>
 </g>
 <g fill="none" stroke="url(#pm3)" stroke-width="1">
  <path d="M244.500 428v24M232.500 440h24M236 431.500l17 17M253 431.500l-17 17"/>
  <g fill="#f5f6f7"><circle cx="244.500" cy="440" r="4"/><circle cx="244.500" cy="427.500" r="2"/><circle cx="244.500" cy="452.500" r="2"/><circle cx="232" cy="440" r="2"/><circle cx="257" cy="440" r="2"/><circle cx="235.700" cy="431.200" r="2"/><circle cx="253.300" cy="431.200" r="2"/><circle cx="235.700" cy="448.800" r="2"/><circle cx="253.300" cy="448.800" r="2"/></g>
 </g>
 <!-- row5 -->
 <g fill="none" stroke="#5a86e6" stroke-width=".8">
  <path d="M131.800 477.500v24.700h22"/><path d="M133.500 479.300h5" stroke-width="1.300"/>
  <path d="M134.500 502v-6.500l3-1.500 3-3 3-1 3-3.500 3-2 2.500-2.500v20z" fill="#c7d8f8"/>
  <path d="M136.500 502v-7M139 502v-9M141.500 502v-11.500M144 502v-12.500M146.500 502v-15.500M149 502v-18M151.200 502v-19" stroke-width=".6"/>
  <path d="M134.500 494l3-1.500 3-3 3-1 3-3.500 3-2 2.500-2.500"/>
  <path d="M155.800 491.500h5v2.500a2.500 2.500 0 0 1-5 0zM158.300 496.500v2.500M156.300 500.800h4M154.300 492.300c-1 0-1 2.500.8 2.500M162.300 492.300c1 0 1 2.500-.8 2.500" />
  <path d="M154 488l.8 1M162.500 488l-.8 1M158.300 486.500v1.300" stroke-width=".6"/>
 </g>
 <g fill="none" stroke="#4f7fe4" stroke-width=".8">
  <circle cx="185.300" cy="479.500" r="2.600" stroke-dasharray="1.300 .8" stroke-width="1.600"/><circle cx="189.700" cy="485" r="2.100" stroke-dasharray="1 .7" stroke-width="1.400"/>
  <path d="M200 478.500c0-4 8.500-4 8.500.5s-5 3.500-8 3.300l-2 2.200v-3c-.3-.7 1.500-1.700 1.500-3z" fill="#dbe6fb"/><circle cx="204.500" cy="478.300" r="1.500"/><path d="M204.500 479.800v1.200"/>
  <circle cx="193.800" cy="491" r="3.300" fill="#dbe6fb"/><path d="M190.500 490c1-2.300 5.500-2.300 6.600 0" stroke-width="1.400"/>
  <path d="M186 504.500v-4.300c0-2 2.200-3 4.300-3.500l3.500 3 3.500-3c2.100.5 4.300 1.500 4.300 3.500v4.300z" fill="#7ea2ee"/>
  <path d="M192.300 497.500l1.500 2.500 1.500-2.500M193.800 500v4.500" stroke="#dbe6fb"/>
  <path d="M202 500.500c0-2 3-2 3 0 0-2 3-2 3 0 0 2-3 3.300-3 3.300s-3-1.300-3-3.300z" fill="#5a86e6" stroke="none"/>
  <path d="M182 497.500h.1M200.500 489h.1M183 488.500h.1" stroke-width="1.300" stroke-linecap="round"/>
 </g>
 <g fill="none" stroke="url(#pm3)" stroke-width=".9">
  <path d="M233.800 475.900h14l6 6v21.600h-20zM247.800 475.900v6h6"/>
  <circle cx="239.800" cy="482.800" r="3.300"/><path d="M239.800 479.500v3.300h3.300"/><path d="M245.500 486.500h5.500M245.500 489h5.500M237 491.500h14"/>
  <path d="M237.500 500.500v-5h2v5M241.300 500.500v-3.500h2v3.500M245 500.500v-6.300h2v6.300M248.700 500.500v-2.500h2v2.500M236.500 500.500h15"/>
 </g>
 <!-- row6 -->
 <rect x="130.300" y="522.900" width="32.700" height="32.600" rx="6.500" fill="url(#tb)"/>
 <g fill="none" stroke="#fff" stroke-width=".9" opacity=".95"><path d="M146.300 539.500l-4-6M146.300 539.500l8-4M146.300 539.500l-8.500 6M146.300 539.500l6 7M146.300 539.500l9 1.500"/><g fill="url(#tb)"><circle cx="146.300" cy="539.500" r="2.700"/><circle cx="142" cy="533" r="1.700"/><circle cx="155" cy="535.300" r="1.400"/><circle cx="137.300" cy="546" r="2"/><circle cx="152.700" cy="547" r="1.700"/><circle cx="156" cy="541.300" r="1.200"/></g></g>
 <g fill="none" stroke="#4f7fe4" stroke-width=".8">
  <rect x="183.500" y="530.500" width="23" height="14.500" rx="1" fill="#dbe6fb"/><path d="M183.500 542h23M193 545l-.8 4h6l-.8-4M189.500 549.700h11.500" /><rect x="190.500" y="549" width="9.500" height="1.300" fill="#4f7fe4" stroke="none"/>
  <rect x="181.500" y="531.500" width="8" height="6" fill="#4f7fe4"/><path d="M182.500 532.500l3 2.500 3-2.500" stroke="#fff" stroke-width=".6"/>
  <path d="M187 540l3.500-2.500 2.500 1.500 5-4.500" stroke-width="1"/>
  <circle cx="203.800" cy="531.800" r="3.600" fill="#7ea2ee"/><path d="M203.800 531.800v-3.600M203.800 531.800l2.800 2"/>
  <path d="M186 527.300h.1M189.500 526.200h.1M193 527.300h.1" stroke-width="1.400" stroke-linecap="round"/>
  <rect x="199" y="537.500" width="5.500" height="3.300" fill="#4f7fe4" stroke="none"/>
 </g>
 <rect x="228.600" y="522.900" width="32" height="32.600" rx="6.500" fill="url(#ro)"/>
 <g fill="none" stroke="#fff" stroke-width=".9" opacity=".95"><path d="M237 529.500h9.500l5 5v15h-14.500zM246.500 529.500v5h5"/><path d="M239 532h2M242 532h2.500M239 534.200h2"/><path d="M240.500 546.500v-4h1.800v4M243.500 546.500v-6h1.800v6M246.500 546.500v-4.800h1.800v4.800M249.500 546.500v-7h1.800v7M239.500 546.500h13" fill="#fff" fill-opacity=".35"/><path d="M240.500 540l3-2 2.500 1 4-3.500"/></g>
 <!-- row7 partial -->
 <path d="M131.500 580v-2.500a6 6 0 0 1 6-6h18.500a6 6 0 0 1 6 6v2.500z" fill="#e0304c"/>
 <rect x="184.500" y="573.300" width="21" height="8" rx="1" fill="#e8eefc" stroke="#8aa4e8" stroke-width=".8"/>
 <path d="M242.500 578v-2.500a3.300 3.300 0 0 1 6.600 0v2.500" fill="none" stroke="#9a4fd6" stroke-width="1.100"/>
 <!-- ===== text toolbar ===== -->
 <rect x="280" y="130" width="662" height="23.300" fill="#fff"/>
 <path d="M280 153.500h662" stroke="#e6e9eb" stroke-width="1"/>
 <g font-size="6" fill="#3a3f44">
  <path d="M292 143.300l2.700-6.300 2.700 6.300M293 141.200h3.400" fill="none" stroke="#222" stroke-width=".9"/><rect x="290.800" y="145" width="7.800" height="1.500" fill="#222"/>
  <text x="309.700" y="143.800" textLength="52" lengthAdjust="spacingAndGlyphs">Barlow Condensed</text>
  <path d="M384.800 141l1.700 1.700 1.700-1.700M431 141l1.700 1.700 1.700-1.700" fill="none" stroke="#555" stroke-width=".8"/>
  <path d="M399 134v15M445.500 134v15M508 134v15M533 134v15M575 134v15" stroke="#e6e9eb" stroke-width="1"/>
  <text x="409.700" y="143.800" textLength="10.800" lengthAdjust="spacingAndGlyphs">220</text>
  <rect x="450.200" y="134.200" width="14.500" height="15" rx="1.500" fill="#eef0f1"/>
  <text x="455.300" y="144.800" font-size="8.500" font-weight="bold" fill="#222">B</text>
  <text x="473.800" y="144.800" font-size="8.500" font-style="italic" font-family="'Liberation Serif',serif" fill="#222">I</text>
  <text x="491.300" y="144.300" font-size="8" fill="#222">U</text><path d="M491.300 146h5.800" stroke="#222" stroke-width=".8"/>
  <path d="M516.500 139h5.500M515.500 141.700h7.500M516.500 144.400h5.500" stroke="#444" stroke-width=".9"/>
  <g fill="#333"><rect x="541" y="138.500" width="1.800" height="1.800"/><rect x="541" y="141" width="1.800" height="1.800"/><rect x="541" y="143.500" width="1.800" height="1.800"/><rect x="544" y="138.900" width="3.500" height="1"/><rect x="544" y="141.400" width="3.500" height="1"/><rect x="544" y="143.900" width="3.500" height="1"/>
  <circle cx="559.700" cy="139.400" r=".7"/><circle cx="559.700" cy="141.900" r=".7"/><circle cx="559.700" cy="144.400" r=".7"/><rect x="561.300" y="138.900" width="5" height="1"/><rect x="561.300" y="141.400" width="5" height="1"/><rect x="561.300" y="143.900" width="5" height="1"/></g>
  <rect x="584.500" y="141.300" width="6" height="4.300" rx=".8" fill="none" stroke="#333" stroke-width=".9"/><path d="M585.700 141.300v-1.300a1.800 1.800 0 0 1 3.600 0v1.300" fill="none" stroke="#333" stroke-width=".9"/>
  <circle cx="608" cy="142" r="3.200" fill="none" stroke="#c2c6ca" stroke-width=".8"/><path d="M606.600 143.800l1.400-3.600 1.400 3.600M607 142.800h2" fill="none" stroke="#c2c6ca" stroke-width=".7"/>
  <g fill="none" stroke="#444" stroke-width=".9"><circle cx="626" cy="143.700" r="1.500"/><circle cx="629.500" cy="140.200" r="1.500"/><path d="M627 142.700l1.500-1.500"/></g>
  <path d="M642 140.200h8.500M642 143.800h8.500M644.500 137.800v8.400M648 137.800v8.400" stroke="#444" stroke-width="1" stroke-dasharray="1.100 .6"/>
  <text x="661.500" y="144" font-weight="bold" fill="#333" textLength="21.500" lengthAdjust="spacingAndGlyphs">Position</text>
  <text x="698" y="144" font-weight="bold" fill="#333" textLength="41.500" lengthAdjust="spacingAndGlyphs">Save to Library</text>
 </g>
 <!-- collapse tabs -->
 <path d="M279.500 339.500c1 3 10 5 10 9v12c0 4-9 6-10 9z" fill="#fff"/><path d="M286.500 352.200l-3.600 2.400 3.600 2.400z" fill="#222"/>
 <rect x="938.600" y="154" width="3.400" height="425" fill="#fcfdfd"/><path d="M940 352.500c-1 3-12 5.500-12 9.500v9c0 4 11 6.500 12 9.500z" fill="#fff"/><path d="M936 363.800l-4 2.600 4 2.600z" fill="#222"/>
 <!-- page side icons -->
 <g fill="none" stroke="#555" stroke-width=".8">
  <path d="M808.700 169.700h4l2.300 2.300v6h-6.300zM812.700 169.700v2.300h2.300M811.800 173.200v3M810.300 174.700h3"/>
  <path d="M810.300 187.700h4.500v6.300h-4.500zM810.300 189.200h-1.600v6.300h4.500v-1.500"/>
  <path d="M809 205.500h5l.8-1v7.300h-5.800z" stroke="#d0d4d7" fill="#e3e6e8"/>
  <path d="M810.95 221.39L811.11 220.34L812.29 220.34L812.45 221.39L813.37 221.77L814.22 221.14L815.06 221.98L814.43 222.83L814.81 223.75L815.86 223.91L815.86 225.09L814.81 225.25L814.43 226.17L815.06 227.02L814.22 227.86L813.37 227.23L812.45 227.61L812.29 228.66L811.11 228.66L810.95 227.61L810.03 227.23L809.18 227.86L808.34 227.02L808.97 226.17L808.59 225.25L807.54 225.09L807.54 223.91L808.59 223.75L808.97 222.83L808.34 221.98L809.18 221.14L810.03 221.77z" stroke-width=".85" stroke-linejoin="round"/><circle cx="811.700" cy="224.500" r="1.400" stroke-width=".8"/>
 </g>
 <!-- zoom control -->
 <rect x="912" y="463.200" width="19" height="66.200" rx="2" fill="#fff" stroke="#e6e9eb" stroke-width=".6"/>
 <path d="M918.700 472h5M921.200 469.500v5M919.200 487.500h4" stroke="#444" stroke-width=".8"/>
 <text x="914.300" y="505" font-size="5.200" font-weight="bold" fill="#333" textLength="14.400" lengthAdjust="spacingAndGlyphs">100%</text>
 <path d="M912.500 511.500h18" stroke="#e6e9eb" stroke-width=".7"/>
 <path d="M918.700 523l5-5M921.200 518h2.500v2.500M921.200 523h-2.500v-2.500" fill="none" stroke="#333" stroke-width=".8"/>
 <!-- help -->
 <rect x="894.500" y="539.600" width="28.500" height="19" rx="8.500" fill="#40b0ae"/>
 <text x="901.700" y="551.300" font-size="6" font-weight="bold" fill="#fff" textLength="14" lengthAdjust="spacingAndGlyphs">Help</text>
 <!-- ===== poster ===== -->
 <rect x="410.800" y="160.800" width="392.400" height="420" fill="#d6f4ef"/>
 <rect x="412.400" y="162.400" width="389.200" height="420" fill="#79bd96"/>
 <rect x="413.300" y="163.300" width="387.400" height="420" fill="#ea8a2c"/>
 <rect x="414.500" y="164.500" width="385" height="420" fill="#d3352b"/>
 <!-- dashed swirls -->
 <g fill="none" stroke="#a08748" stroke-width="1.600" stroke-dasharray="4.500 4.200" stroke-linecap="round" opacity=".8">
  <path d="M524.9 168.8 C525 182 522 192 514 199 C505 206 492 208.5 482 208 C470 207.5 461 204 456 201 C449 197 445 191 447.5 187.5 C450 184.5 456 186 458 191 C460 196 459.5 205 455 211 C450 216 440 217.5 429 216"/>
  <path d="M690.1 168.8 C690.0 182.0 693.0 192.0 701.0 199.0 C710.0 206.0 723.0 208.5 733.0 208.0 C745.0 207.5 754.0 204.0 759.0 201.0 C766.0 197.0 770.0 191.0 767.5 187.5 C765.0 184.5 759.0 186.0 757.0 191.0 C755.0 196.0 755.5 205.0 760.0 211.0 C765.0 216.0 775.0 217.5 786.0 216.0"/>
 </g>
 <!-- text boxes -->
 <text x="541.700" y="235" font-size="11.800" fill="#f1e7dc" stroke="#f1e7dc" stroke-width=".2" textLength="129" lengthAdjust="spacingAndGlyphs" style="font-family:'DejaVu Serif','Liberation Serif',serif">3 DAYS ONLY</text>
 <text x="456.400" y="274.800" font-size="35" fill="#2a1e1c" stroke="#2a1e1c" stroke-width="1" textLength="302.400" lengthAdjust="spacingAndGlyphs" style="font-family:'DejaVu Serif','Liberation Serif',serif">Valentine's Day</text>
 <!-- special -->
 <rect x="452" y="309.800" width="313.400" height="46.200" fill="#8a7638"/>
 <path id="heart" d="M444.300 343.700c-8-6.500-12-10-12-14.700 0-3.300 2.500-5.700 5.700-5.700 2.600 0 4.800 1.300 6.300 3.500 1.500-2.200 3.700-3.500 6.300-3.500 3.200 0 5.700 2.400 5.700 5.700 0 4.700-4 8.200-12 14.700z" fill="#d9a6c3"/>
 <use href="#heart" x="330.900"/>
 <text transform="translate(453.500 374.200) scale(.64 1)" x="0" y="0" font-size="93.500" font-weight="bold" fill="#221d1c" stroke="#221d1c" stroke-width="4.200" stroke-linejoin="miter" textLength="476" lengthAdjust="spacing" style="font-family:'DejaVu Sans','Liberation Sans',sans-serif">SPECIAL</text>
 <!-- bubble -->
 <path d="M479.700 410.300h258a8 8 0 0 1 8 8v38.500a8 8 0 0 1-8 8h-240.500l-15.700 15.200q-2.800 2-3.800-1.500l-2-13.800a4 4 0 0 1-4-4v-42.400a8 8 0 0 1 8-8z" fill="#e9e6de"/>
 <circle cx="502.600" cy="434.700" r="19.400" fill="#f1c632"/>
 <circle cx="502.600" cy="434.700" r="12" fill="#231d18"/>
 <circle cx="502.600" cy="434.700" r="13.200" fill="none" stroke="#231d18" stroke-width="3" stroke-dasharray="3.200 2.724"/>
 <text x="494" y="442" font-size="19.500" font-weight="bold" fill="#a8985a" textLength="16.800" lengthAdjust="spacingAndGlyphs" style="font-family:'DejaVu Sans','Liberation Sans',sans-serif">$0</text>
 <text x="527.800" y="446.800" font-size="30.800" font-weight="bold" fill="#f1c632" stroke="#f1c632" stroke-width="1.300" textLength="201" lengthAdjust="spacingAndGlyphs" style="font-family:'DejaVu Sans','Liberation Sans',sans-serif">ENROLLMENT FEE</text>
 <path d="M634 474.200q50-1.200 98 0c6 .2 9 3.500 9 8.500v20.500c0 6-3 9-9 9.300q-49 1.200-99 0c-6-.3-9.200-3.300-9.200-8.800v-21c0-5.300 3.200-8.300 10.200-8.500z" fill="#271f1a"/>
 <text x="636" y="503.200" font-size="24.400" font-weight="bold" fill="#a8975a" stroke="#a8975a" stroke-width="1" textLength="89.300" lengthAdjust="spacingAndGlyphs" style="font-family:'DejaVu Sans','Liberation Sans',sans-serif">FEB 14-16</text>
 <!-- dumbbell -->
 <rect x="469.600" y="488.600" width="10.300" height="95" rx="1.500" fill="#3d3d40"/><rect x="469.600" y="488.600" width="3.600" height="95" rx="1.500" fill="#2a2a2c"/>
 <rect x="549" y="488.600" width="10.400" height="95" rx="1.500" fill="#3d3d40"/><rect x="549" y="488.600" width="3.600" height="95" rx="1.500" fill="#2a2a2c"/>
 <path d="M470 496h9.500M470 502h9.500M470 508h9.500M470 514h9.500M470 520h9.500M470 560h9.500M470 566h9.500M470 572h9.500M549.500 496h9.500M549.500 502h9.500M549.500 508h9.500M549.500 514h9.500M549.500 520h9.500M549.500 560h9.500M549.500 566h9.500M549.500 572h9.500" stroke="#2a2a2c" stroke-width=".7"/>
 <ellipse cx="454" cy="539.600" rx="20" ry="31.300" fill="#4f4f52"/><path d="M439.300 507.500L454 508.300V570.900L439.300 571.100z" fill="#4f4f52"/>
 <ellipse cx="588.500" cy="539" rx="14.500" ry="28" fill="#4f4f52"/><path d="M575 509.800L588.500 511V567L575 567.800z" fill="#4f4f52"/>
 <ellipse cx="575" cy="538.800" rx="16.200" ry="29" fill="#1d1c1d"/>
 <circle cx="568.200" cy="539.700" r="5.600" fill="#e0453a"/>
 <rect x="440" y="536" width="129.500" height="9.800" rx="3" fill="#434346"/><rect x="470" y="541.500" width="99" height="4.300" rx="2" fill="#2c2c2e"/>
 <ellipse cx="439.300" cy="539.300" rx="20.600" ry="31.800" fill="#1d1c1d"/>
 <ellipse cx="437" cy="540" rx="11" ry="18" fill="#262527"/>
 <circle cx="440.300" cy="540.700" r="5.600" fill="#e0453a"/><circle cx="438.500" cy="540.700" r="3.300" fill="#3a3a3c"/><rect x="434" y="538.300" width="5.500" height="4.800" rx="2" fill="#434346"/>
 <circle cx="569.500" cy="540.300" r="3" fill="#434346"/>
 <!-- guides + selection -->
 <path d="M607.400 163.500v420" stroke="#f7a345" stroke-width="1.300"/>
 <path d="M412 282.300h390M412 386.600h390" fill="none" stroke="#8a8f96" stroke-width="1" opacity=".55"/><path d="M412 282.300h-15.800v104.300h15.800M802 282.300h16.300v104.300h-16.300" fill="none" stroke="#69adbb" stroke-width="1"/>
 <g fill="#f2fbfc" stroke="#69adbb" stroke-width=".9">
  <rect x="393.700" y="279.800" width="5" height="5"/><rect x="815.800" y="279.800" width="5" height="5"/><rect x="393.700" y="384.100" width="5" height="5"/><rect x="815.800" y="384.100" width="5" height="5"/>
  <rect x="394.400" y="329.500" width="3.600" height="10" rx="1.800"/><rect x="816.500" y="329.500" width="3.600" height="10" rx="1.800"/>
 </g>
 <rect x="424.600" y="222.900" width="365" height="13.900" fill="none" stroke="#f4922f" stroke-width="1.200"/>
 <rect x="424.600" y="244" width="365" height="38.300" fill="none" stroke="#f4922f" stroke-width="1.200"/>
 <circle cx="607.500" cy="267.500" r="5.700" fill="#f4fbfb" stroke="#9ad0d0" stroke-width=".6"/>
 <path d="M607.500 264.300v6.400M604.300 267.500h6.400M606.300 265.300l1.200-1.200 1.200 1.200M606.300 269.700l1.200 1.200 1.200-1.200M605.300 266.300l-1.200 1.200 1.200 1.200M609.700 266.300l1.200 1.200-1.200 1.200" fill="none" stroke="#8a8f94" stroke-width=".6"/>
</svg>
</div>
<div id="dock">
<svg width="773" height="56" viewBox="125 580 773 56">
 <defs>
  <linearGradient id="fnd" x1="0" x2="0" y1="0" y2="1"><stop offset="0" stop-color="#38b6fb"/><stop offset="1" stop-color="#1c7df0"/></linearGradient>
  <linearGradient id="zm" x1="0" x2="0" y1="0" y2="1"><stop offset="0" stop-color="#2f8cff"/><stop offset="1" stop-color="#0b5cf0"/></linearGradient>
  <linearGradient id="stk" x1="0" x2="0" y1="0" y2="1"><stop offset="0" stop-color="#f6e784"/><stop offset="1" stop-color="#ecd560"/></linearGradient>
  <linearGradient id="gear" x1="0" x2="0" y1="0" y2="1"><stop offset="0" stop-color="#a6a8ab"/><stop offset="1" stop-color="#6c6e72"/></linearGradient>
  <g id="chr"><circle r="6" fill="#fff"/><path d="M0 0L-4.760 -2.750A5.500 5.500 0 0 1 4.760 -2.750z" fill="#ea4335"/><path d="M0 0L4.760 -2.750A5.500 5.500 0 0 1 0 5.500z" fill="#fbbc05"/><path d="M0 0L0 5.500A5.500 5.500 0 0 1 -4.760 -2.750z" fill="#34a853"/><circle r="2.600" fill="#fff"/><circle r="2" fill="#4285f4"/></g>
  <clipPath id="fc"><rect x="132.300" y="587.700" width="37.700" height="38" rx="8.500"/></clipPath>
 </defs>
 <!-- finder -->
 <g clip-path="url(#fc)"><rect x="132.300" y="587.700" width="37.700" height="38" fill="url(#fnd)"/><path d="M152.500 587.700c-3 8-4.500 15-4.500 21h4.500c-.5 6 0 12 1 17h17v-38z" fill="#e9eef4"/></g>
 <path d="M143.300 597v4.300M159.500 597v4.300" stroke="#1d2a3a" stroke-width="1.500" stroke-linecap="round"/><path d="M139.500 612.500c6 6 17.500 6 24 0" fill="none" stroke="#1d2a3a" stroke-width="1.400" stroke-linecap="round"/>
 <path d="M152.500 587.700c-3 8-4.500 15-4.500 21h4.500c-.5 6 0 12 1 17" fill="none" stroke="#1d2a3a" stroke-width="1" opacity=".75"/>
 <!-- calendar -->
 <rect x="181" y="587.700" width="37.300" height="38" rx="8.500" fill="#fbfbfb"/><path d="M181 599.500v-3.300a8.500 8.500 0 0 1 8.500-8.500h20.300a8.500 8.500 0 0 1 8.500 8.500v3.300z" fill="#ee4c45"/>
 <text x="191.200" y="597.300" font-size="7.600" font-weight="bold" fill="#fff" textLength="17" lengthAdjust="spacingAndGlyphs">JUN</text>
 <text x="189.300" y="618" font-size="20.500" fill="#3a3a3c" textLength="18.500" lengthAdjust="spacingAndGlyphs">11</text>
 <!-- settings -->
 <rect x="229.300" y="587.700" width="37.400" height="38" rx="8.500" fill="url(#gear)"/>
 <circle cx="248" cy="606.700" r="14.300" fill="#a4a6a9" stroke="#55575b" stroke-width="1.500"/><circle cx="248" cy="606.700" r="14.800" fill="none" stroke="#5a5c60" stroke-width="2.400" stroke-dasharray="1.500 1.600"/>
 <circle cx="248" cy="606.700" r="10.300" fill="#77797d" stroke="#3e4044" stroke-width="2.200"/><circle cx="248" cy="606.700" r="2.600" fill="#3e4044"/><path d="M248 606.700v-10M248 606.700l8.700 5M248 606.700l-8.700 5" stroke="#3e4044" stroke-width="2"/>
 <circle cx="263.700" cy="592.600" r="8.200" fill="#ee3b34"/><text x="261" y="596.300" font-size="10.500" font-weight="bold" fill="#fff">1</text>
 <!-- spotify -->
 <circle cx="296.300" cy="606" r="19.700" fill="#55c764"/>
 <g fill="none" stroke="#15181a" stroke-linecap="round"><path d="M284.500 600c8-2.500 17-1.700 23.800 2" stroke-width="3.600"/><path d="M285.700 606.500c7-2 14.500-1.300 20.300 1.900" stroke-width="3"/><path d="M287 612.500c5.700-1.600 11.500-1 16.300 1.600" stroke-width="2.500"/></g>
 <!-- zoom -->
 <rect x="325" y="587.700" width="37.700" height="38" rx="8.500" fill="url(#zm)"/>
 <text x="331.300" y="609.600" font-size="10" font-weight="bold" fill="#fff" textLength="26.400" lengthAdjust="spacingAndGlyphs">zoom</text>
 <!-- chrome -->
 <rect x="374.700" y="587.700" width="37.300" height="38" rx="8.500" fill="#f4f5f6"/>
 <use href="#chr" transform="translate(393.400 606.700) scale(2.700)"/>
 <path d="M429.300 588v38.700M692 588v38.700" stroke="#424448" stroke-width="1"/>
 <!-- stickies -->
 <rect x="444.700" y="590.500" width="37.300" height="35.200" rx="7" fill="#d9bd42"/><rect x="444.700" y="587.700" width="37.300" height="34.500" rx="7" fill="url(#stk)"/>
 <path d="M450.500 598.500c2-3 3-4.500 4-2s1.500 2.500 3 0 2.500-1 4-.5 5 .5 8-.5" fill="none" stroke="#b99c2c" stroke-width="1.100"/><path d="M450.500 605h21M450.500 610h15" stroke="#d8bf4a" stroke-width="1.200"/>
 <!-- slack -->
 <rect x="493" y="587.700" width="37.300" height="38" rx="8.500" fill="#fbfbfb"/>
 <g stroke-width="4.300" stroke-linecap="round" fill="none"><path d="M502.4 603.8L508.8 603.8" stroke="#36c5f0"/><path d="M508.8 597.4L508.8 597.5" stroke="#36c5f0"/><path d="M514.6 597.4L514.6 603.8" stroke="#2eb67d"/><path d="M521.0 603.8L520.9 603.8" stroke="#2eb67d"/><path d="M514.6 609.6L521.0 609.6" stroke="#ecb22e"/><path d="M514.6 616.0L514.6 615.9" stroke="#ecb22e"/><path d="M508.8 609.6L508.8 616.0" stroke="#e01e5a"/><path d="M502.4 609.6L502.5 609.6" stroke="#e01e5a"/></g>
 <!-- word -->
 <rect x="541.300" y="587.700" width="37.400" height="38" rx="8.500" fill="#fbfbfb"/>
 <rect x="553" y="593.500" width="20.500" height="6.700" fill="#41a5ee"/><rect x="553" y="600.200" width="20.500" height="6.700" fill="#2b7cd3"/><rect x="553" y="606.900" width="20.500" height="6.700" fill="#185abd"/><rect x="553" y="613.600" width="20.500" height="6.200" fill="#103f91"/>
 <rect x="546" y="598.800" width="14.500" height="15" rx="1.500" fill="#185abd"/><text x="548.300" y="610.300" font-size="10" font-weight="bold" fill="#fff" textLength="9.800" lengthAdjust="spacingAndGlyphs">W</text>
 <!-- preview -->
 <rect x="589.700" y="587.700" width="37.300" height="38" rx="8.500" fill="#e9ecef"/>
 <rect x="592.500" y="590.500" width="31.700" height="32.400" rx="6" fill="#8fb5e3"/><path d="M592.500 608c6-4 13-4.500 18-2s9.500 1.500 13.700 0v11a6 6 0 0 1-6 6h-19.700a6 6 0 0 1-6-6z" fill="#e8edf2"/><path d="M592.500 606c5-1.500 12 .5 16.500 2.500h-16.500z" fill="#3f6a96"/>
 <rect x="607.500" y="604.300" width="17.500" height="4.500" rx="1.500" fill="#1f2124"/><path d="M608.500 608.800h15.500l-1 15.500h-13.500z" fill="#d9dde1" stroke="#8b9096" stroke-width=".7"/><rect x="611" y="613.500" width="10.500" height="7.500" fill="#3a3d42"/>
 <!-- upwork -->
 <circle cx="657.300" cy="606.400" r="22.300" fill="#0b0b0c"/>
 <path d="M643.500 600v7.300a5 5 0 0 0 10 0v-7.300M657.500 620l2.600-12c.9-4.300 3.400-7.400 7.200-7.400a5 5 0 0 1 0 10c-3.400 0-6.200-3-7.800-6.300" fill="none" stroke="#fff" stroke-width="3.300" stroke-linejoin="round"/>
 <!-- minimized windows -->
 <rect x="705.300" y="593.300" width="43.400" height="25" fill="#f3f4f5"/><rect x="705.300" y="593.300" width="43.400" height="3.300" fill="#dfe2e6"/><rect x="707" y="600" width="9.500" height="6" fill="#6fbf4a"/><rect x="707" y="607.500" width="9.500" height="7" fill="#e1e4e7"/><path d="M720 600h22M720 603.500h18M720 607h20M720 610.500h14" stroke="#c9cdd2" stroke-width="1.100"/>
 <rect x="734.2" y="613.500" width="13.600" height="13.600" rx="3" fill="#f6f7f8"/><use href="#chr" transform="translate(741 620.300) scale(.95)"/>
 <rect x="754.300" y="589.300" width="42.700" height="34" fill="#fafafa"/><rect x="754.300" y="589.300" width="42.700" height="4.700" fill="#e6eaf0"/><rect x="754.300" y="594" width="42.700" height="4.300" fill="#101113"/><rect x="754.300" y="617.500" width="42.700" height="5.800" fill="#101113"/><path d="M758 603h30M758 606.500h22M758 610h26M758 613.500h18" stroke="#e3e6ea" stroke-width="1"/>
 <rect x="781.9" y="613.500" width="13.600" height="13.600" rx="3" fill="#f6f7f8"/><use href="#chr" transform="translate(788.700 620.300) scale(.95)"/>
 <rect x="802.700" y="586.700" width="42.600" height="40" fill="#f4f6f7"/><rect x="802.700" y="586.700" width="42.600" height="3.500" fill="#cfe3ee"/><rect x="826.500" y="594.500" width="15" height="22" fill="#c7dde6"/><path d="M806 596h14M806 600h10M806 604h12M806 608h9M806 612h11M806 616h8" stroke="#bcd0dc" stroke-width="1.100"/><path d="M828 598h12M828 601.500h12M828 605h12M828 608.500h12M828 612h10" stroke="#8fb3c4" stroke-width=".9"/>
 <rect x="830.2" y="613.500" width="13.600" height="13.600" rx="3" fill="#f6f7f8"/><use href="#chr" transform="translate(837 620.300) scale(.95)"/>
 <!-- trash -->
 <path d="M856.500 591.500h32.800l-3.300 32a3 3 0 0 1-3 2.700h-20.200a3 3 0 0 1-3-2.700z" fill="#e3e5e8" fill-opacity=".88" stroke="#f4f5f6" stroke-width=".8"/>
 <ellipse cx="872.900" cy="591.500" rx="16.400" ry="4" fill="#c9ccd0" stroke="#f4f5f6" stroke-width=".8"/>
 <path d="M861 590l3.500-4 4 2.500 3.500-3.500 4 3 3.500-2.500 3 3.500 2.500 2c-7 3-17 3-24 0z" fill="#f2f2f2"/><path d="M864 588.500l2.500 2M871.500 586.500l1 3.500M878.500 587.500l-1.500 3M883 589.500l-2 1.500" stroke="#5a6068" stroke-width=".9"/><path d="M866.500 587l2 1.500M875 586l.5 2" stroke="#3a8f6a" stroke-width=".9"/>
 <path d="M864 600l2 22M872.900 600v22M881.800 600l-2 22" stroke="#f7f8f9" stroke-width="1.300" opacity=".55"/>
</svg>
</div>
<div id="menubar">
<svg width="1024" height="18" viewBox="0 0 1024 18">
 <!-- apple logo -->
 <path d="M22.6 6.1c-.9 0-1.6.5-2.1.5s-1.100-.5-1.900-.5c-1.500 0-2.900 1.300-2.900 3.500 0 2.200 1.500 4.500 2.700 4.500.7 0 1.100-.5 2-.5s1.200.5 2 .5c1.100 0 2.200-1.900 2.500-3-1.100-.4-1.700-1.300-1.700-2.400 0-1 .5-1.800 1.300-2.300-.5-.200-1.200-.3-1.900-.3zM22.400 3.200c-.9.100-1.900.9-1.900 2.200v.4c1 0 2-.9 1.900-2.600z" fill="#111"/>
 <g font-size="9.700" fill="#17191d">
  <text x="40.700" y="12.300" font-weight="bold" textLength="35.500" lengthAdjust="spacingAndGlyphs">Chrome</text>
  <text x="91.200" y="12.300" textLength="15" lengthAdjust="spacingAndGlyphs">File</text>
  <text x="121" y="12.300" textLength="16.500" lengthAdjust="spacingAndGlyphs">Edit</text>
  <text x="152.500" y="12.300" textLength="20.500" lengthAdjust="spacingAndGlyphs">View</text>
  <text x="188" y="12.300" textLength="31" lengthAdjust="spacingAndGlyphs">History</text>
  <text x="233" y="12.300" textLength="48" lengthAdjust="spacingAndGlyphs">Bookmarks</text>
  <text x="296" y="12.300" textLength="32" lengthAdjust="spacingAndGlyphs">Profiles</text>
  <text x="343" y="12.300" textLength="15.500" lengthAdjust="spacingAndGlyphs">Tab</text>
  <text x="373" y="12.300" textLength="34.500" lengthAdjust="spacingAndGlyphs">Window</text>
  <text x="421.500" y="12.300" textLength="20" lengthAdjust="spacingAndGlyphs">Help</text>
  <text x="918" y="12.300" textLength="92.500" lengthAdjust="spacingAndGlyphs">Wed Jun 11  4:37 PM</text>
 </g>
 <!-- status icons -->
 <circle cx="702.500" cy="8.800" r="5.600" fill="#8d959f" opacity=".75"/>
 <path d="M700 8.800h2.200M702.800 8.800h2.200" stroke="#b8c8d6" stroke-width="1.600" stroke-linecap="round"/>
 <g fill="#111"><circle cx="726.500" cy="8.800" r="3.600"/>
  <g stroke="#111" stroke-width="1.600" stroke-linecap="round"><path d="M726.500 3.200v11.200M720.900 8.800h11.200M722.500 4.800l8 8M730.500 4.800l-8 8"/></g></g>
 <circle cx="726.500" cy="8.800" r="1.500" fill="#b8c8d6"/>
 <path d="M749.500 3.500h4v2.500h3v5.500h-3v2.500h-4v-2.500h-3v-5.500h3z" fill="#111"/>
 <rect x="772" y="4.300" width="11" height="9" rx="1.500" fill="none" stroke="#111" stroke-width="1.200"/><rect x="772" y="4.300" width="11" height="2.600" fill="#111"/><rect x="774" y="8.500" width="3" height="2.800" fill="#111"/><rect x="778" y="8.500" width="3" height="2.800" fill="#111"/>
 <rect x="797.500" y="4.800" width="15" height="8" rx="2.200" fill="none" stroke="#444" stroke-width="1"/><rect x="799" y="6.300" width="6.500" height="5" rx="1" fill="#111"/><rect x="813.300" y="7.300" width="1.300" height="3" rx=".6" fill="#555"/>
 <g fill="none" stroke="#111" stroke-width="1.500" stroke-linecap="round"><path d="M828.300 7.300a7.400 7.400 0 0 1 10.400 0"/><path d="M830.300 9.700a4.500 4.500 0 0 1 6.400 0"/></g><circle cx="833.500" cy="12.200" r="1.200" fill="#111"/>
 <circle cx="855.800" cy="8" r="3.500" fill="none" stroke="#111" stroke-width="1.400"/><path d="M858.400 10.600l2.800 2.800" stroke="#111" stroke-width="1.500" stroke-linecap="round"/>
 <rect x="874" y="4" width="10.500" height="4.200" rx="2.100" fill="#111"/><rect x="874" y="9.400" width="10.500" height="4.200" rx="2.100" fill="#111"/><circle cx="876.300" cy="6.100" r="1.200" fill="#b8c8d6"/><circle cx="882.200" cy="11.500" r="1.200" fill="#b8c8d6"/>
 <defs><linearGradient id="siri" x1="0" y1="0" x2="1" y2="1"><stop offset="0" stop-color="#3f6df0"/><stop offset=".5" stop-color="#b04bd6"/><stop offset="1" stop-color="#f0506e"/></linearGradient></defs>
 <circle cx="902" cy="8.800" r="5.400" fill="url(#siri)"/><circle cx="902" cy="8.800" r="2.600" fill="#fff" opacity=".55"/>
<rect x="0" y="17" width="1024" height=".8" fill="#6e7681" opacity=".8"/>
</svg>
</div>
</div>
</body>
</html>
